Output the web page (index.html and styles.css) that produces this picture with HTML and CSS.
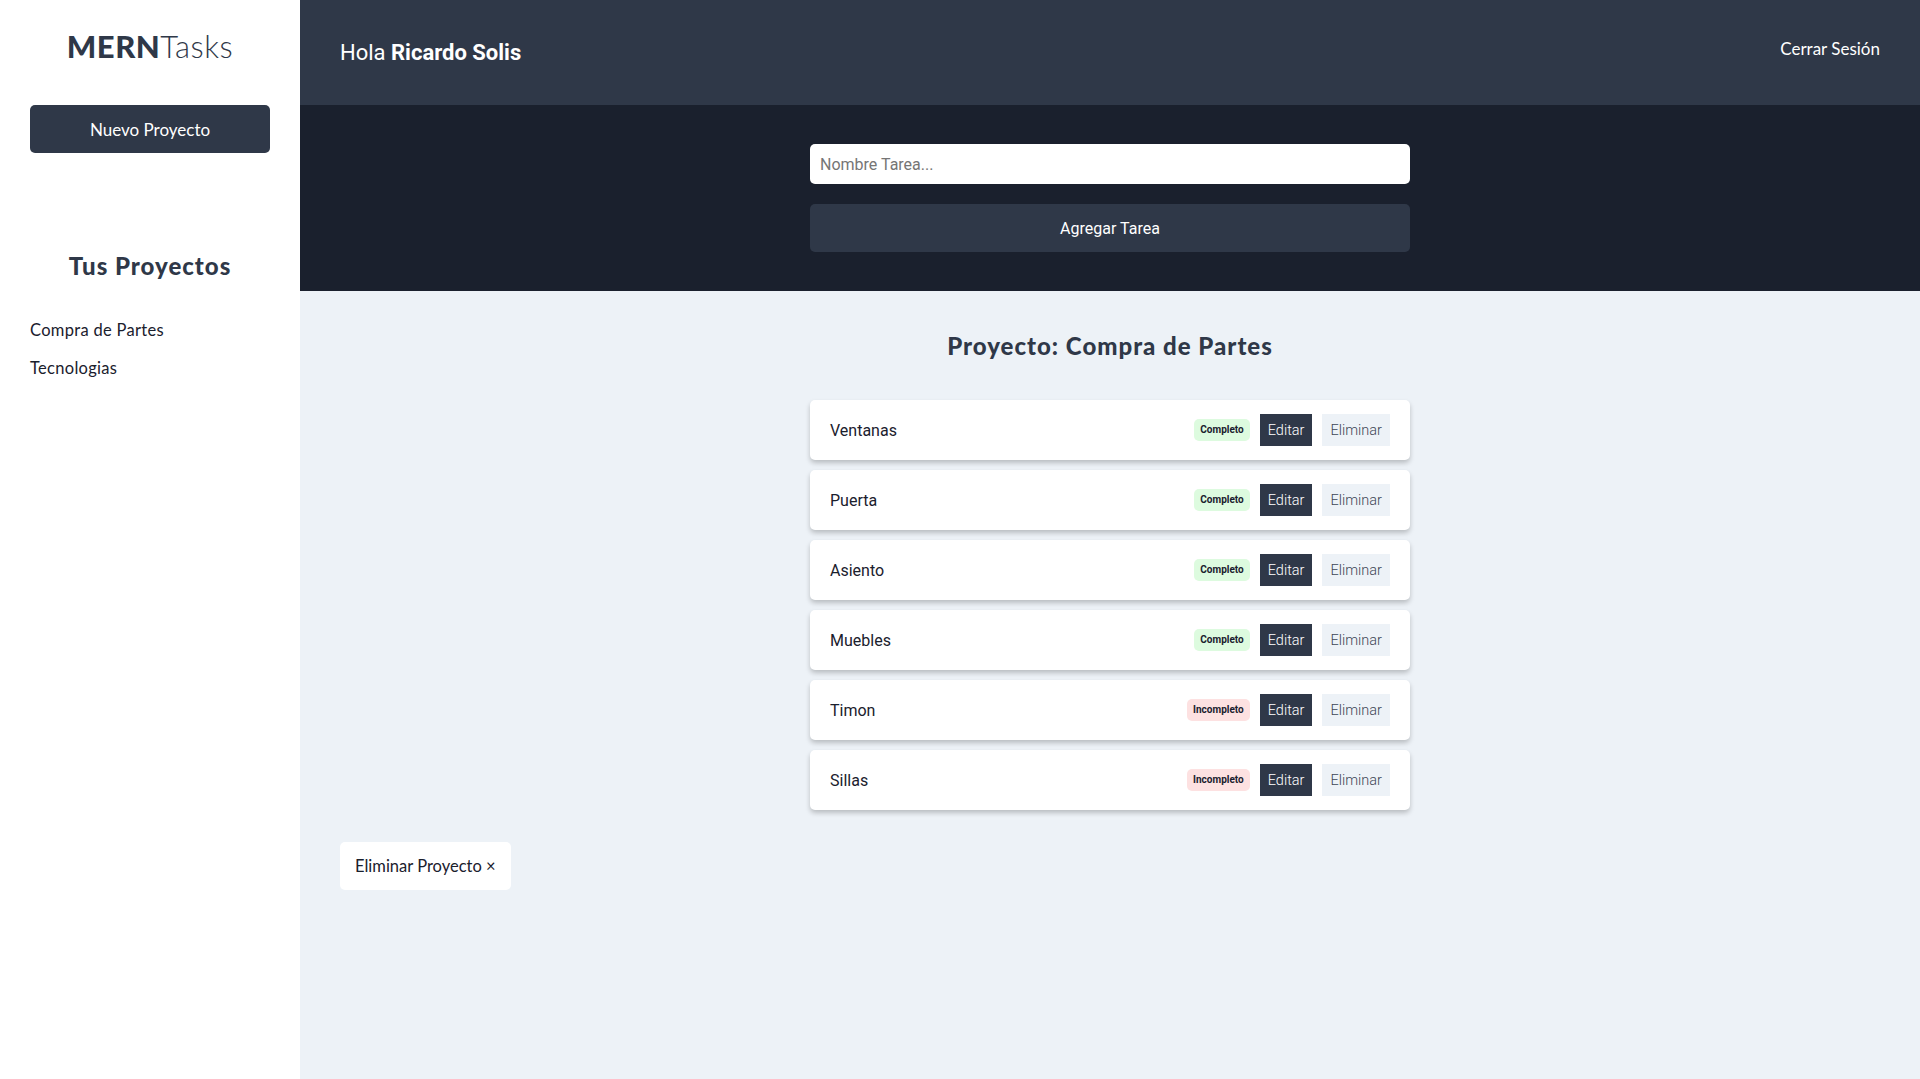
FILE: index.html
```html
<!DOCTYPE html>
<html lang="es">
<head>
<meta charset="utf-8">
<title>MERNTasks</title>
<link rel="stylesheet" href="styles.css">
</head>
<body>
<div class="app">
  <aside class="sidebar">
    <h1 class="logo"><span class="logo-bold">MERN</span><span class="logo-light">Tasks</span></h1>
    <button class="btn-new" type="button">Nuevo Proyecto</button>
    <h2 class="projects-title">Tus Proyectos</h2>
    <ul class="project-list">
      <li><a href="#" class="project-link">Compra de Partes</a></li>
      <li><a href="#" class="project-link">Tecnologias</a></li>
    </ul>
  </aside>
  <div class="main">
    <header class="topbar">
      <p class="greeting">Hola <strong>Ricardo Solis</strong></p>
      <a href="#" class="logout">Cerrar Sesión</a>
    </header>
    <section class="form-area">
      <form class="task-form">
        <input class="task-input" type="text" placeholder="Nombre Tarea...">
        <button class="btn-add" type="button">Agregar Tarea</button>
      </form>
    </section>
    <section class="content">
      <h2 class="project-title">Proyecto: Compra de Partes</h2>
      <ul class="task-list">
        <li class="task"><span class="task-name">Ventanas</span><div class="task-actions"><span class="badge badge-ok">Completo</span><button class="btn-edit" type="button">Editar</button><button class="btn-del" type="button">Eliminar</button></div></li>
        <li class="task"><span class="task-name">Puerta</span><div class="task-actions"><span class="badge badge-ok">Completo</span><button class="btn-edit" type="button">Editar</button><button class="btn-del" type="button">Eliminar</button></div></li>
        <li class="task"><span class="task-name">Asiento</span><div class="task-actions"><span class="badge badge-ok">Completo</span><button class="btn-edit" type="button">Editar</button><button class="btn-del" type="button">Eliminar</button></div></li>
        <li class="task"><span class="task-name">Muebles</span><div class="task-actions"><span class="badge badge-ok">Completo</span><button class="btn-edit" type="button">Editar</button><button class="btn-del" type="button">Eliminar</button></div></li>
        <li class="task"><span class="task-name">Timon</span><div class="task-actions"><span class="badge badge-no">Incompleto</span><button class="btn-edit" type="button">Editar</button><button class="btn-del" type="button">Eliminar</button></div></li>
        <li class="task"><span class="task-name">Sillas</span><div class="task-actions"><span class="badge badge-no">Incompleto</span><button class="btn-edit" type="button">Editar</button><button class="btn-del" type="button">Eliminar</button></div></li>
      </ul>
      <button class="btn-del-project" type="button">Eliminar Proyecto &times;</button>
    </section>
  </div>
</div>
</body>
</html>
```

FILE: styles.css
```css
* { box-sizing: border-box; }
html, body { margin: 0; padding: 0; }
body {
  font-family: Roboto, "Liberation Sans", sans-serif;
  color: #1a202d;
  background: #edf2f7;
}
.app {
  display: flex;
  min-height: 1079px;
}
.sidebar {
  width: 300px;
  flex: 0 0 300px;
  background: #fff;
  padding: 28px 30px;
}
.logo {
  margin: 0;
  text-align: center;
  font-family: Lato, "Open Sans", sans-serif;
  font-size: 31px;
  line-height: 36px;
  color: #2f3848;
  letter-spacing: 0.5px;
}
.logo-bold { font-weight: 900; }
.logo-light { font-weight: 300; }
.btn-new {
  display: block;
  width: 100%;
  height: 48px;
  margin-top: 41px;
  border: none;
  border-radius: 5px;
  background: #2f3848;
  color: #fff;
  font-family: Lato, "Open Sans", sans-serif;
  font-size: 17px;
  font-weight: 400;
}
.projects-title {
  margin: 98px 0 0;
  text-align: center;
  font-family: Lato, "Open Sans", sans-serif;
  font-weight: 900;
  font-size: 24px;
  line-height: 30px;
  letter-spacing: 1px;
  color: #2f3848;
}
.project-list {
  list-style: none;
  margin: 39px 0 0;
  padding: 0;
}
.project-list li { margin-bottom: 17px; line-height: 20px; }
.project-link {
  font-family: Lato, "Open Sans", sans-serif;
  font-size: 16.5px;
  letter-spacing: 0.3px;
  color: #1a202d;
  text-decoration: none;
}
.main {
  flex: 1;
  display: flex;
  flex-direction: column;
}
.topbar {
  height: 105px;
  background: #2f3848;
  display: flex;
  justify-content: space-between;
  align-items: center;
  padding: 0 40px;
}
.greeting {
  margin: 0;
  color: #fff;
  font-size: 22px;
  font-weight: 400;
}
.greeting strong { font-weight: 700; }
.logout {
  color: #fff;
  text-decoration: none;
  font-family: Lato, "Open Sans", sans-serif;
  font-size: 17px;
  margin-top: -9px;
}
.form-area {
  background: #1a202d;
  padding: 39px 0;
}
.task-form {
  width: 600px;
  margin: 0 auto;
  display: flex;
  flex-direction: column;
  gap: 20px;
}
.task-input {
  height: 40px;
  border: none;
  border-radius: 5px;
  padding: 0 10px;
  font-family: Roboto, sans-serif;
  font-size: 16px;
  color: #1a202d;
  background: #fff;
}
.task-input::placeholder { color: #757575; }
.btn-add {
  height: 48px;
  border: none;
  border-radius: 5px;
  background: #2f3848;
  color: #fff;
  font-family: Roboto, sans-serif;
  font-size: 16px;
}
.content {
  flex: 1;
  padding: 40px 40px 40px;
}
.project-title {
  margin: 0;
  text-align: center;
  font-family: Lato, "Open Sans", sans-serif;
  font-weight: 900;
  font-size: 24px;
  line-height: 30px;
  letter-spacing: 1px;
  color: #2f3848;
}
.task-list {
  list-style: none;
  width: 600px;
  margin: 39px auto 0;
  padding: 0;
  display: flex;
  flex-direction: column;
  gap: 10px;
}
.task {
  height: 60px;
  background: #fff;
  border-radius: 5px;
  box-shadow: 0 3px 5px rgba(0, 0, 0, 0.22);
  display: flex;
  align-items: center;
  justify-content: space-between;
  padding: 0 20px;
}
.task-name { font-size: 16px; color: #1a202d; }
.task-actions {
  display: flex;
  align-items: center;
  gap: 10px;
}
.badge {
  height: 22px;
  line-height: 22px;
  padding: 0 6px;
  border-radius: 5px;
  font-size: 10px;
  font-weight: 700;
  color: #1a202d;
}
.badge-ok { background: #ddfbdf; }
.badge-no { background: #fde1e1; }
.btn-edit, .btn-del {
  height: 32px;
  border: none;
  padding: 0 8px;
  font-family: Roboto, sans-serif;
  font-weight: 300;
  font-size: 14.5px;
}
.btn-edit { background: #2f3848; color: #fff; }
.btn-del { background: #edf2f7; color: #3d4656; }
.btn-del-project {
  margin-top: 32px;
  height: 48px;
  padding: 0 15px;
  border: none;
  border-radius: 5px;
  background: #fff;
  color: #1a202d;
  font-family: Lato, "Open Sans", sans-serif;
  font-size: 16.5px;
}
```
